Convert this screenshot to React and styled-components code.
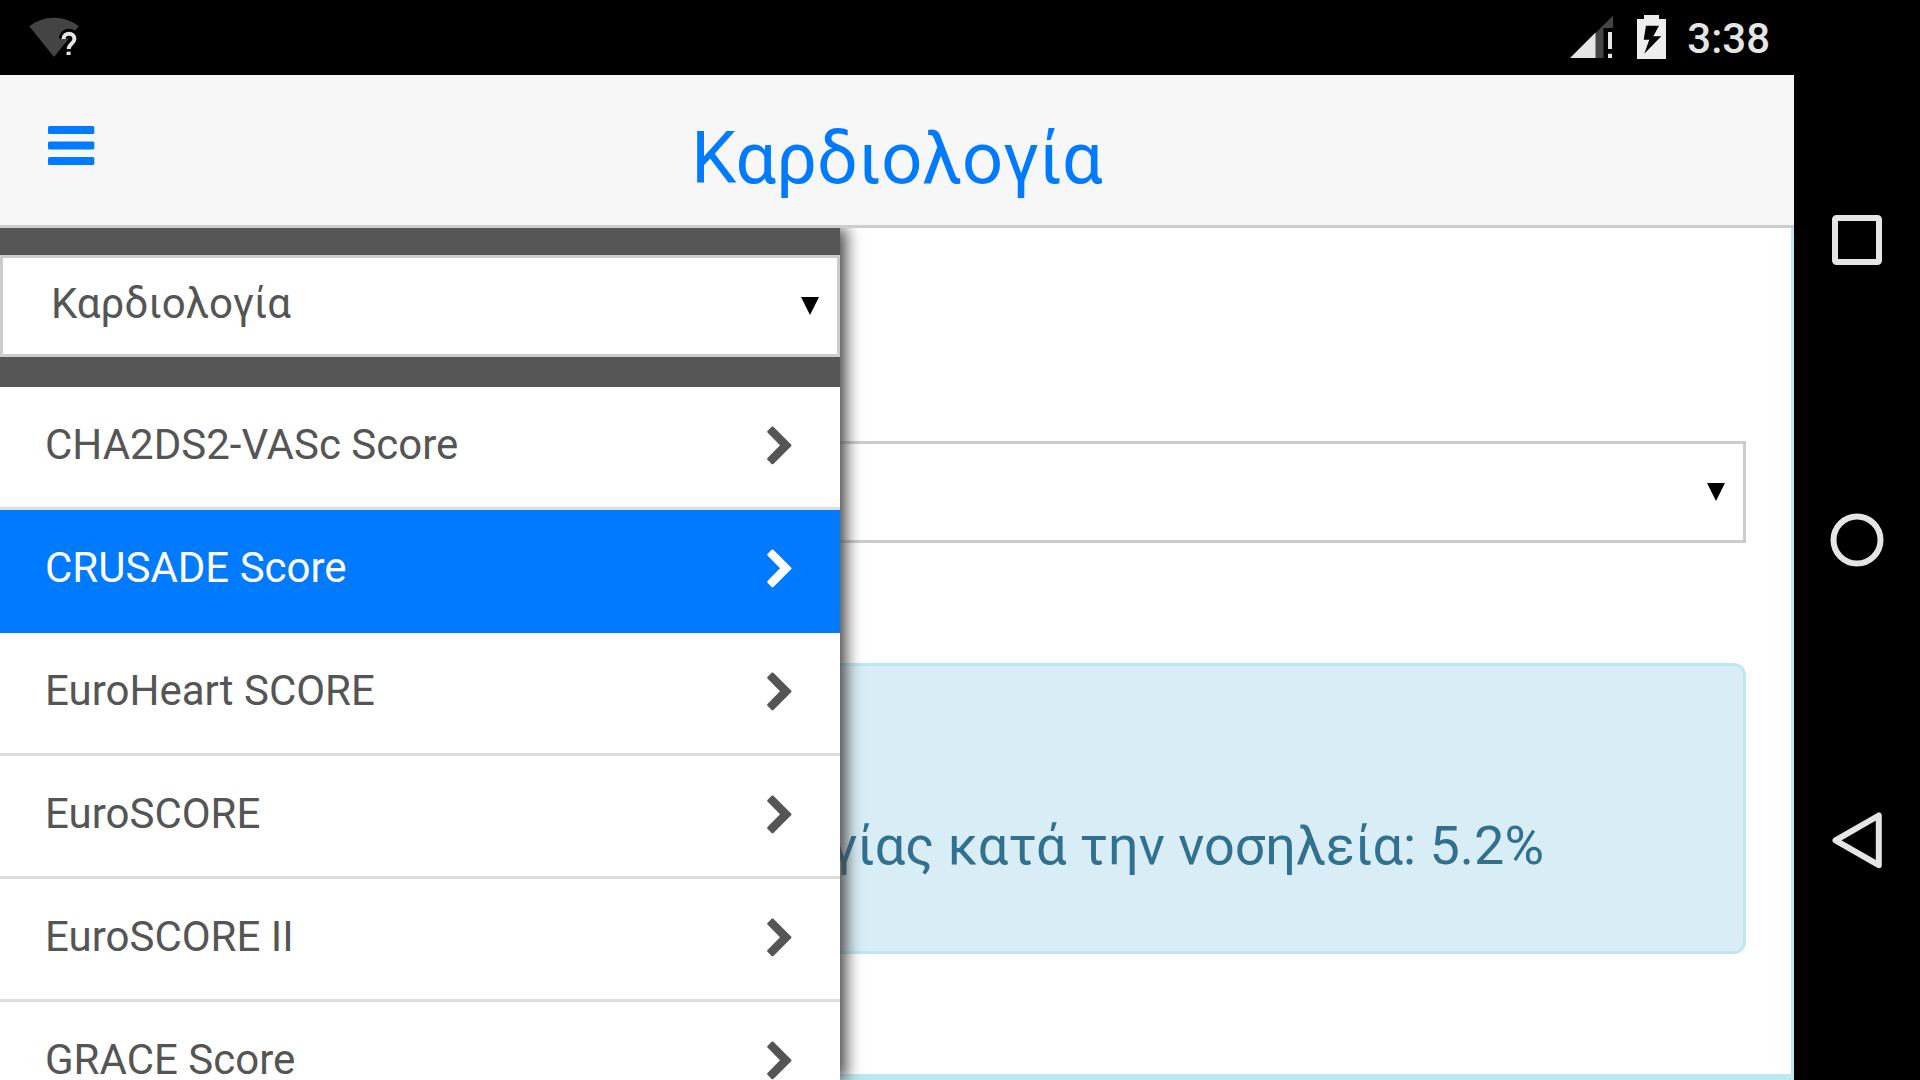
import React from "react";
import styled, { createGlobalStyle } from "styled-components";

const Global = createGlobalStyle`
  *, *::before, *::after { box-sizing: border-box; }
  html, body, #root { height: 100%; }
  body { margin: 0; overflow: hidden; background: #000; font-family: Roboto, "Noto Sans", sans-serif; color: #555; }
  button, select { font: inherit; color: inherit; }
  svg { display: block; }
`;

const Device = styled.div`
  display: flex;
  height: 100%;
  background: #000;
`;

const Screen = styled.div`
  flex: 1;
  min-width: 0;
  display: flex;
  flex-direction: column;
`;

const StatusBar = styled.div`
  flex: none;
  display: flex;
  align-items: center;
  justify-content: space-between;
  height: 75px;
  padding: 0 24px 0 27px;
  background: #000;
  color: #e5e5e5;
`;

const StatusGroup = styled.div`
  display: flex;
  align-items: center;
  gap: 20px;
`;

const Clock = styled.time`
  padding-top: 3px;
  font-size: 42px;
  font-weight: 500;
  line-height: 48px;
`;

const Header = styled.header`
  flex: none;
  display: grid;
  grid-template-columns: 144px 1fr 144px;
  align-items: center;
  height: 153px;
  background: #f7f7f7;
  border-bottom: 3px solid #ccc;
  color: #007aff;
`;

const MenuButton = styled.button`
  justify-self: start;
  padding: 24px 48px 33px;
  border: 0;
  background: none;
`;

const Title = styled.h1`
  margin: 0;
  padding-top: 17px;
  font-size: 72px;
  font-weight: 400;
  line-height: 84px;
  text-align: center;
`;

const Body = styled.div`
  position: relative;
  flex: 1;
  min-height: 0;
  display: flex;
  overflow: hidden;
`;

const Content = styled.main`
  flex: 1;
  display: flex;
  flex-direction: column;
  gap: 120px;
  padding: 213px 45px 0;
  background: #fff;
  border-right: 3px solid #bce8f1;
  border-bottom: 6px solid #bce8f1;
`;

const Result = styled.section`
  display: flex;
  justify-content: flex-end;
  padding: 145px 199px 71px 45px;
  background: #d9edf7;
  border: 3px solid #bce8f1;
  border-radius: 12px;
  color: #31708f;
`;

const ResultText = styled.p`
  margin: 0;
  font-size: 54px;
  line-height: 69px;
  white-space: nowrap;
`;

const Drawer = styled.aside`
  position: absolute;
  top: 0;
  bottom: 0;
  left: 0;
  width: 840px;
  background: #555;
  box-shadow: 6px 0 15px #444;
`;

const DrawerTop = styled.div`
  padding: 27px 0 30px;
`;

const SelectBox = styled.div`
  display: grid;
  align-items: center;

  > * { grid-area: 1 / 1; }
  > svg { justify-self: end; margin-right: 21px; pointer-events: none; }
`;

const Select = styled.select`
  appearance: none;
  width: 100%;
  height: 102px;
  padding: 0 60px 6px 48px;
  border: 3px solid #ccc;
  border-radius: 0;
  background: #fff;
  font-size: 42px;
`;

const List = styled.ul`
  margin: 0;
  padding: 0;
  list-style: none;
`;

const Item = styled.a`
  display: flex;
  align-items: center;
  justify-content: space-between;
  height: 123px;
  padding: 0 48px 4px 45px;
  border-bottom: 3px solid ${(p) => (p.$active ? "#007aff" : "#ddd")};
  background: ${(p) => (p.$active ? "#007aff" : "#fff")};
  color: ${(p) => (p.$active ? "#fff" : "#555")};
  font-size: 42px;
  line-height: 48px;
  text-decoration: none;
`;

const NavBar = styled.nav`
  flex: none;
  display: flex;
  flex-direction: column;
  width: 126px;
  padding: 90px 0;
  background: #000;
`;

const NavButton = styled.button`
  flex: 1;
  display: flex;
  align-items: center;
  justify-content: center;
  padding: 0;
  border: 0;
  background: none;
`;

const Wifi = () => (
  <svg width="54" height="43" viewBox="27 16 54 43" aria-hidden="true">
    <path d="M29.3 26.3Q40 17.7 54 17.7T78.7 26.3L54 57Z" fill="#444" />
    <path d="M63.5 38.5C63.5 31.5 74.5 31.5 74.5 38.5C74.5 43 68.6 43.6 68.6 49M68.6 51.5V55" fill="none" stroke="#000" strokeWidth="9" />
    <path d="M63.6 39C63.6 32 74.4 32 74.4 39C74.4 43.4 68.6 44 68.6 49.2M68.6 51.6V55" fill="none" stroke="#e5e5e5" strokeWidth="4" />
    <path d="M66 49.2H71V51.4H66Z" fill="#000" />
  </svg>
);

const Signal = () => (
  <svg width="47" height="45" viewBox="1568 16 47 45" aria-hidden="true">
    <path d="M1594 34.5L1612 16.7V29H1602.5V59H1594Z" fill="#444" />
    <path d="M1569 59L1594.5 33.5V59Z" fill="#e5e5e5" />
    <path d="M1607 33H1611V50H1607ZM1607 54.7H1611V59H1607Z" fill="#e5e5e5" />
  </svg>
);

const Battery = () => (
  <svg width="31" height="45" viewBox="1636 15 31 45" aria-hidden="true">
    <path
      d="M1644 15H1659V19H1666V59H1637V19H1644ZM1646 25.7L1643.7 39.7H1649.3L1644.3 53.7L1661.3 36.3H1653.3L1659 25.7Z"
      fill="#eee"
      fillRule="evenodd"
    />
  </svg>
);

const Bars = () => (
  <svg width="47" height="39" viewBox="0 0 47 39" fill="currentColor" aria-hidden="true">
    <rect width="46.3" height="8" rx="1.5" />
    <rect y="15.6" width="46.3" height="8" rx="1.5" />
    <rect y="31" width="46.3" height="8" rx="1.5" />
  </svg>
);

const Caret = () => (
  <svg width="18" height="18" viewBox="0 0 18 18" aria-hidden="true">
    <path d="M0 0H18L9 18Z" fill="#000" />
  </svg>
);

const Chevron = () => (
  <svg width="25" height="39" viewBox="0 0 25 39" fill="currentColor" aria-hidden="true">
    <path d="M.5 5 4.6.8Q5.5 0 6.4.8L24.1 18.4Q25 19.3 24.1 20.2L6.4 37.9Q5.5 38.7 4.6 37.9L.5 33.8Q-.3 33 .5 32.1L13 19.3.5 6.6Q-.3 5.8.5 5Z" />
  </svg>
);

const navIcons = [
  ["Overview", <rect x="7" y="7" width="44" height="44" rx="1.5" />],
  ["Home", <circle cx="29" cy="29" r="23.5" />],
  ["Back", <path d="M7.5 29.3 50.8 4.5V54.2Z" />],
];

const scores = [
  "CHA2DS2-VASc Score",
  "CRUSADE Score",
  "EuroHeart SCORE",
  "EuroSCORE",
  "EuroSCORE II",
  "GRACE Score",
];

export default function App() {
  return (
    <>
      <Global />
      <Device>
        <Screen>
          <StatusBar>
            <Wifi />
            <StatusGroup>
              <Signal />
              <Battery />
              <Clock>3:38</Clock>
            </StatusGroup>
          </StatusBar>
          <Header>
            <MenuButton type="button" aria-label="Menu">
              <Bars />
            </MenuButton>
            <Title>Καρδιολογία</Title>
          </Header>
          <Body>
            <Content>
              <SelectBox>
                <Select aria-label="Score value" />
                <Caret />
              </SelectBox>
              <Result>
                <ResultText>αιμορραγίας κατά την νοσηλεία: 5.2%</ResultText>
              </Result>
            </Content>
            <Drawer>
              <DrawerTop>
                <SelectBox>
                  <Select aria-label="Specialty">
                    <option>Καρδιολογία</option>
                  </Select>
                  <Caret />
                </SelectBox>
              </DrawerTop>
              <List>
                {scores.map((name) => (
                  <li key={name}>
                    <Item href="#" $active={name === "CRUSADE Score"}>
                      {name}
                      <Chevron />
                    </Item>
                  </li>
                ))}
              </List>
            </Drawer>
          </Body>
        </Screen>
        <NavBar>
          {navIcons.map(([label, shape]) => (
            <NavButton key={label} type="button" aria-label={label}>
              <svg width="58" height="58" viewBox="0 0 58 58" fill="none" stroke="#e5e5e5" strokeWidth="6" strokeLinejoin="round" aria-hidden="true">
                {shape}
              </svg>
            </NavButton>
          ))}
        </NavBar>
      </Device>
    </>
  );
}
